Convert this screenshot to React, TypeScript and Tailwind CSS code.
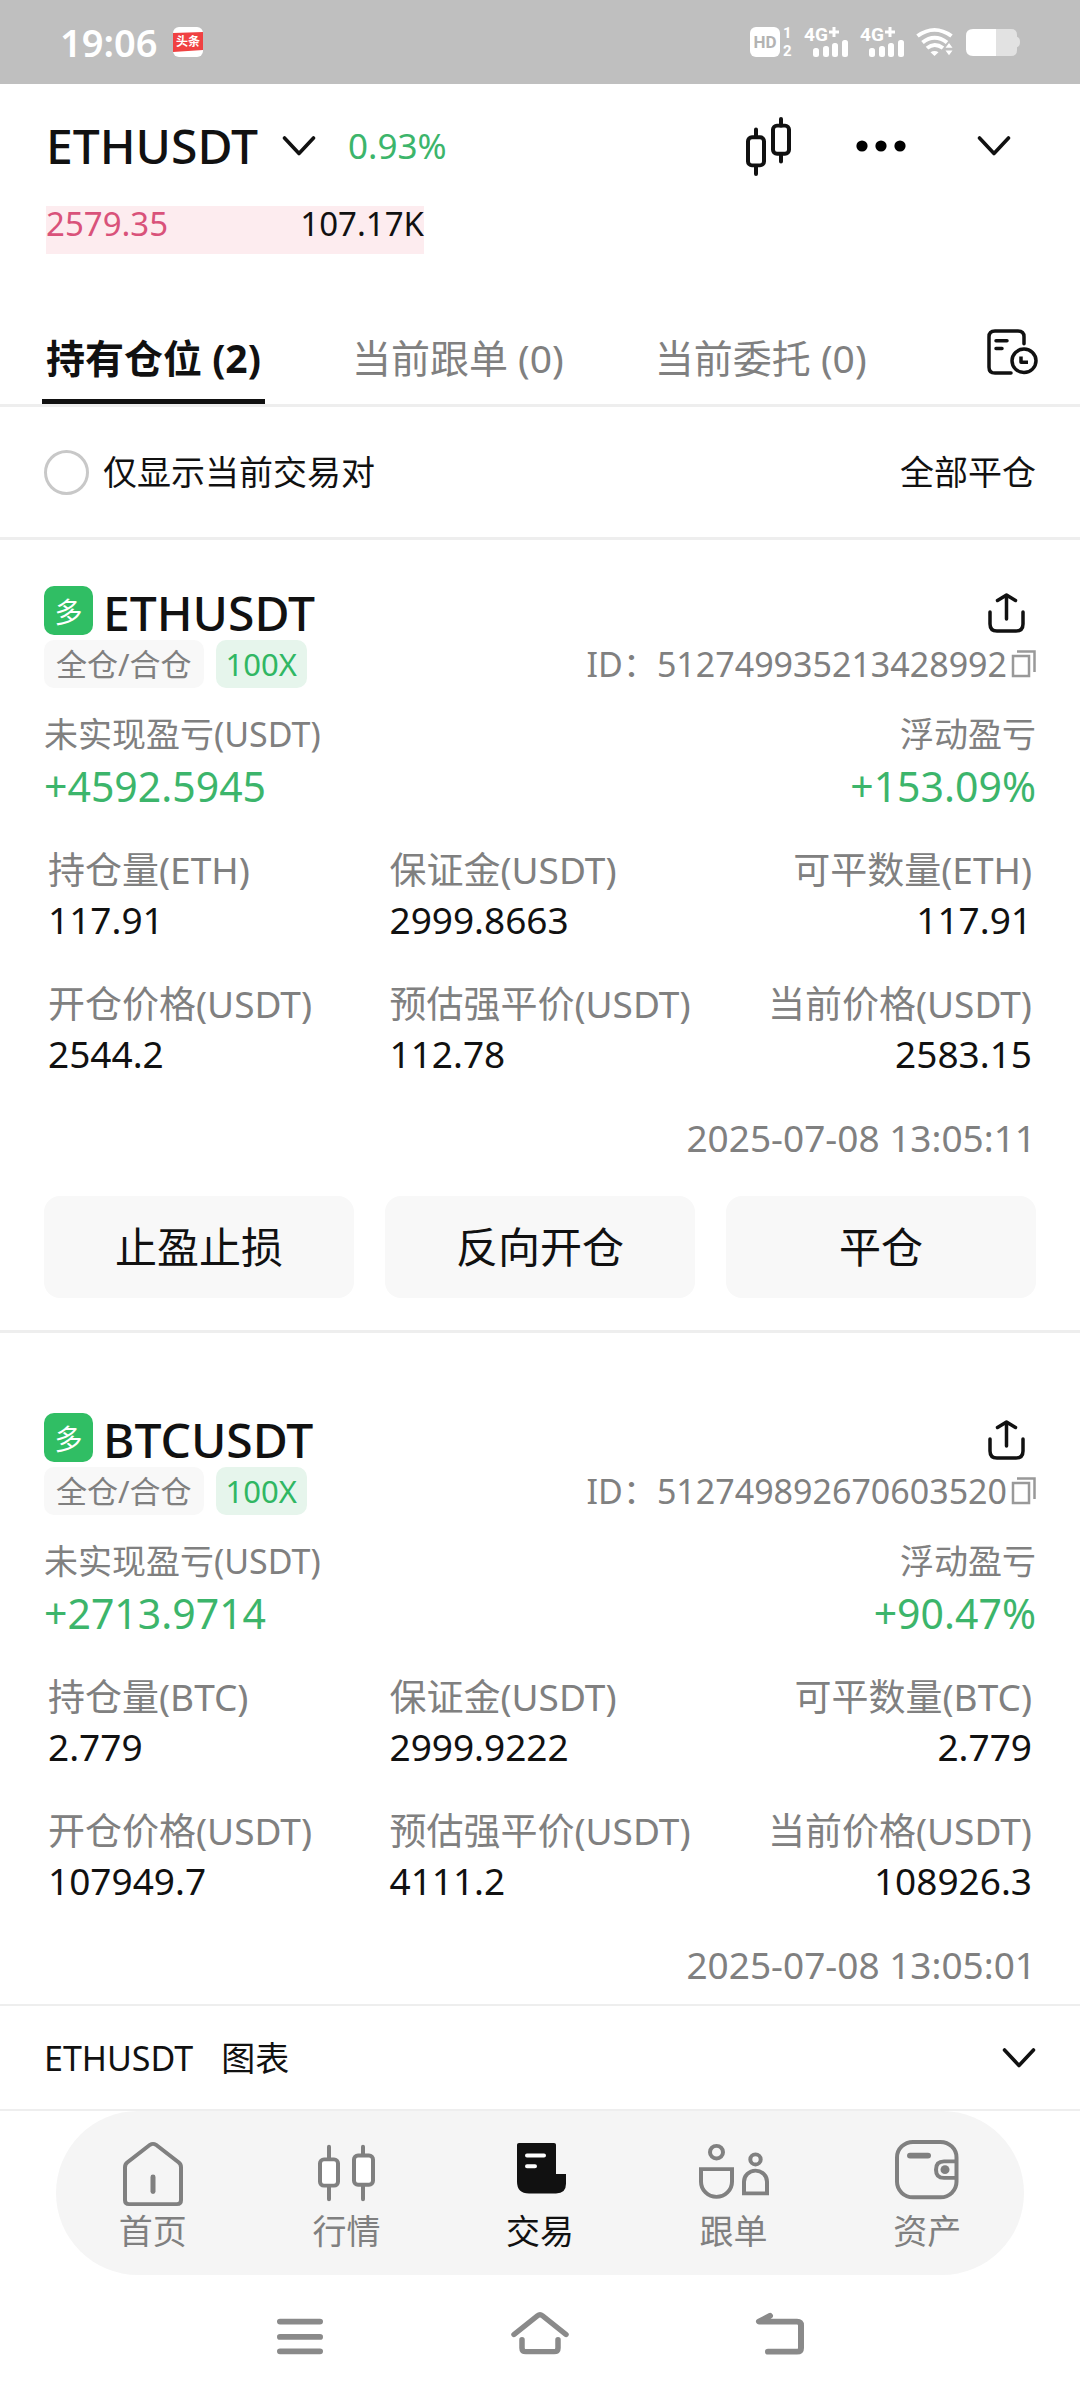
import type { ReactNode } from "react";

type Position = {
  symbol: string;
  coin: string;
  id: string;
  pnl: string;
  pnlRate: string;
  size: string;
  margin: string;
  openPrice: string;
  liqPrice: string;
  markPrice: string;
  time: string;
  actions: string[];
};

const positions: Position[] = [
  {
    symbol: "ETHUSDT",
    coin: "ETH",
    id: "512749935213428992",
    pnl: "+4592.5945",
    pnlRate: "+153.09%",
    size: "117.91",
    margin: "2999.8663",
    openPrice: "2544.2",
    liqPrice: "112.78",
    markPrice: "2583.15",
    time: "2025-07-08 13:05:11",
    actions: ["止盈止损", "反向开仓", "平仓"],
  },
  {
    symbol: "BTCUSDT",
    coin: "BTC",
    id: "512749892670603520",
    pnl: "+2713.9714",
    pnlRate: "+90.47%",
    size: "2.779",
    margin: "2999.9222",
    openPrice: "107949.7",
    liqPrice: "4111.2",
    markPrice: "108926.3",
    time: "2025-07-08 13:05:01",
    actions: [],
  },
];

const tabs = [
  { label: "持有仓位 (2)", active: true },
  { label: "当前跟单 (0)", active: false },
  { label: "当前委托 (0)", active: false },
];

function ChevronDown() {
  return (
    <svg width="34" height="20" viewBox="0 0 34 20" fill="none" stroke="#111" strokeWidth="3.6" strokeLinecap="round" strokeLinejoin="round">
      <path d="M2.5 2 17 17.5 31.500 2" />
    </svg>
  );
}

function SignalIcon() {
  return (
    <svg className="overflow-visible font-['Roboto']" width="44" height="30" viewBox="0 0 44 30" fill="#fff">
      <text x="0" y="14" fontSize="19" fontWeight="700">
        4G
      </text>
      <path d="M25 5h10M30 0v10" stroke="#fff" strokeWidth="3" />
      <rect x="9" y="21" width="6" height="9" rx="2.5" />
      <rect x="19" y="19" width="6" height="11" rx="2.5" />
      <rect x="28" y="16" width="6" height="14" rx="2.5" />
      <rect x="38" y="13" width="6" height="17" rx="2.5" />
    </svg>
  );
}

function StatusBar() {
  return (
    <div className="flex h-[84px] items-center justify-between bg-[#bfbfbf] px-[60px]">
      <div className="flex items-center gap-4">
        <span className="text-[38px] leading-[44px] font-semibold text-white">19:06</span>
        <svg width="30" height="30" viewBox="0 0 30 30">
          <rect width="30" height="30" rx="6" fill="#fff" />
          <path d="M0 6 30 5v18L0 25z" fill="#f04142" />
          <text x="15" y="19" fontSize="12" fontWeight="700" fill="#fff" textAnchor="middle">
            头条
          </text>
        </svg>
      </div>
      <div className="flex items-center gap-3">
        <div className="flex items-center gap-[3px] font-['Roboto'] font-bold text-white">
          <span className="h-[30px] w-[30px] rounded-md bg-white text-center text-[17px] leading-[30px] text-[#b3b3b3]">HD</span>
          <span className="flex w-[9px] flex-col text-[15px] leading-[18px]">
            <span>1</span>
            <span>2</span>
          </span>
        </div>
        <SignalIcon />
        <SignalIcon />
        <svg width="38" height="30" viewBox="0 0 38 32" preserveAspectRatio="none" fill="none" stroke="#fff" strokeWidth="4">
          <path d="M1.500 9.500Q18.500-3.500 35.500 9.500" />
          <path d="M6.500 16.500Q18.500 6.500 31 16.500" />
          <path d="M11 22.500Q18.500 16 27 22.500" />
          <path d="M14.500 27q4-3 8 0l-4 4z" fill="#fff" stroke="none" />
          <path d="M29.500 22l3.500-5 3.500 5zM29.500 25h7L33 30z" fill="#fff" stroke="none" />
        </svg>
        <svg width="54" height="27" viewBox="0 0 54 28" preserveAspectRatio="none">
          <path d="M30 0h15q6 0 6 6v2q3 1 3 5.500T51 19v3q0 6-6 6H30z" fill="#e2e2e2" />
          <path d="M30 0H7Q0 0 0 7v14q0 7 7 7h23z" fill="#fff" />
        </svg>
      </div>
    </div>
  );
}

function Header() {
  return (
    <header className="pt-[30px]">
      <div className="flex h-16 items-center justify-between pr-[30px] pl-[46px]">
        <div className="flex items-center gap-8">
          <button type="button" className="flex items-center gap-6">
            <span className="text-[48px] leading-[64px] font-medium">ETHUSDT</span>
            <ChevronDown />
          </button>
          <span className="text-[35px] leading-[64px] text-[#3cb56b]">0.93%</span>
        </div>
        <div className="flex items-center">
          <button type="button" aria-label="K线" className="flex w-[113px] justify-center">
            <svg width="46" height="60" viewBox="0 0 46 62" preserveAspectRatio="none" fill="none" stroke="#111" strokeWidth="4" strokeLinecap="round">
              <rect x="3" y="22" width="16" height="29" rx="4" />
              <rect x="28" y="10" width="16" height="29" rx="4" />
              <path d="M11 14v7M11 52v8M36 3v7M36 40v7" />
            </svg>
          </button>
          <button type="button" aria-label="更多" className="flex w-[113px] justify-center">
            <svg width="50" height="12" viewBox="0 0 50 12">
              <circle cx="6" cy="6" r="5.6" />
              <circle cx="25" cy="6" r="5.6" />
              <circle cx="44" cy="6" r="5.6" />
            </svg>
          </button>
          <button type="button" aria-label="收起" className="flex w-[113px] justify-center">
            <ChevronDown />
          </button>
        </div>
      </div>
      <div className="mt-7 ml-[46px] flex h-12 w-[35%] justify-between bg-[#fdecef] text-[33px] leading-[36px]">
        <span className="text-[#d9527a]">2579.35</span>
        <span>107.17K</span>
      </div>
    </header>
  );
}

function Tabs() {
  return (
    <div className="mt-[79px] flex items-start justify-between border-b-[3px] border-[#eee] px-[42px]">
      <div className="flex gap-[83px]" role="tablist">
        {tabs.map((tab) => (
          <button
            key={tab.label}
            type="button"
            role="tab"
            aria-selected={tab.active}
            className={
              tab.active
                ? "border-b-[5px] border-[#111] px-1 pb-4 text-[39px] leading-[50px] font-bold"
                : "border-b-[5px] border-transparent px-1 pb-4 text-[39px] leading-[50px] text-[#808080]"
            }
          >
            {tab.label}
          </button>
        ))}
      </div>
      <button type="button" aria-label="历史记录" className="-mt-1">
        <svg width="51" height="46" viewBox="0 0 51 47" preserveAspectRatio="none" fill="none" stroke="#111" strokeWidth="3.5" strokeLinecap="round" strokeLinejoin="round">
          <path d="M37 15V8q0-6-6-6H8Q2 2 2 8v31q0 6 6 6h16" />
          <path d="M9 12h11M9 20h6" />
          <circle cx="37" cy="32.5" r="12" />
          <path d="M34 28v6h7" strokeLinecap="butt" />
        </svg>
      </button>
    </div>
  );
}

function Metric({ label, value, right }: { label: string; value: string; right?: boolean }) {
  return (
    <div className={right ? "text-right" : ""}>
      <dt className="text-[37px] leading-[48px] text-[#808080]">{label}</dt>
      <dd className="text-[37px] leading-[52px]">{value}</dd>
    </div>
  );
}

function PositionCard({ position }: { position: Position }) {
  return (
    <article className="border-[#eee] px-11 pt-20 pb-8 not-last:border-b-[3px] first:pt-[46px] last:pb-0">
      <div className="flex h-[54px] items-center justify-between">
        <div className="flex h-full items-start gap-[10px]">
          <span className="size-[49px] rounded-[10px] bg-[#30be64] text-center text-[28px] leading-[52px] text-white">多</span>
          <h2 className="text-[48px] leading-[54px] font-medium">{position.symbol}</h2>
        </div>
        <button type="button" aria-label="分享" className="flex w-[60px] justify-center">
          <svg width="37" height="40" viewBox="0 0 37 40" fill="none" stroke="#111" strokeWidth="3.5" strokeLinecap="round" strokeLinejoin="round">
            <path d="M2 19v12q0 7 7 7h19q7 0 7-7V19" />
            <path d="M18.500 26V2M9.500 7.500 18.500 2l9 5.500" />
          </svg>
        </button>
      </div>

      <div className="flex h-12 items-center justify-between text-[#808080]">
        <div className="flex gap-3 text-[31px] leading-[48px]">
          <span className="rounded-[10px] bg-[#f8f8f8] px-3">全仓/合仓</span>
          <span className="rounded-[10px] bg-[#e6f5ec] px-[10px] text-[#30b763]">100X</span>
        </div>
        <div className="flex items-center gap-1 text-[34px] leading-[48px]">
          <span>ID：{position.id}</span>
          <button type="button" aria-label="复制">
            <svg width="25" height="28" viewBox="0 0 25 28" fill="none" stroke="#999" strokeWidth="2.5">
              <rect x="2" y="6" width="16" height="20" />
              <path d="M6 1.500h17.500V22" />
            </svg>
          </button>
        </div>
      </div>

      <dl className="mt-[22px] flex justify-between">
        <div>
          <dt className="text-[34px] leading-[48px] text-[#808080]">未实现盈亏(USDT)</dt>
          <dd className="text-[41px] leading-[56px] text-[#3cb56b]">{position.pnl}</dd>
        </div>
        <div className="text-right">
          <dt className="text-[34px] leading-[48px] text-[#808080]">浮动盈亏</dt>
          <dd className="text-[41px] leading-[56px] text-[#3cb56b]">{position.pnlRate}</dd>
        </div>
      </dl>

      <dl className="mt-8 grid grid-cols-[auto_auto_auto] justify-between gap-y-[34px] px-1">
        <Metric label={`持仓量(${position.coin})`} value={position.size} />
        <Metric label="保证金(USDT)" value={position.margin} />
        <Metric label={`可平数量(${position.coin})`} value={position.size} right />
        <Metric label="开仓价格(USDT)" value={position.openPrice} />
        <Metric label="预估强平价(USDT)" value={position.liqPrice} />
        <Metric label="当前价格(USDT)" value={position.markPrice} right />
      </dl>

      <p className="mt-8 text-right text-[37px] leading-[52px] text-[#808080]">{position.time}</p>

      {position.actions.length > 0 && (
        <div className="mt-8 grid grid-cols-3 gap-[31px]">
          {position.actions.map((action) => (
            <button key={action} type="button" className="h-[102px] rounded-2xl bg-[#f8f8f8] text-[42px] leading-[52px]">
              {action}
            </button>
          ))}
        </div>
      )}
    </article>
  );
}

function NavItem({ label, active, children }: { label: string; active?: boolean; children: ReactNode }) {
  return (
    <a href="#" className={active ? "flex flex-col items-center text-[#111]" : "flex flex-col items-center text-[#808080]"}>
      <svg width="72" height="68" viewBox="0 0 72 70" preserveAspectRatio="none" fill="none" stroke="currentColor" strokeWidth="4">
        {children}
      </svg>
      <span className="text-[34px] leading-[46px]">{label}</span>
    </a>
  );
}

function BottomNav() {
  return (
    <nav className="mx-14 grid grid-cols-5 rounded-full bg-[#f5f5f5] pt-[29px] pb-[21px]">
      <NavItem label="首页">
        <path d="M8 28q0-3 2.500-5L33 5q3-2 6 0l22.500 18q2.500 2 2.500 5v34q0 4-4 4H12q-4 0-4-4z" />
        <path d="M36 38v15" strokeWidth="5" strokeLinecap="round" />
      </NavItem>
      <NavItem label="行情">
        <path d="M19 7v54M53 7v54" strokeLinecap="round" />
        <rect x="10" y="20" width="18" height="27" rx="4" fill="#fff" />
        <rect x="44" y="16" width="19" height="30" rx="4" fill="#fff" />
      </NavItem>
      <NavItem label="交易" active>
        <path d="M13 5q0-2 2-2h35q2 0 2 2v30h10v10q0 10-10 10H25q-12 0-12-12z" fill="currentColor" stroke="none" />
        <path d="M23 16h17M23 27h8" stroke="#fff" strokeLinecap="round" />
      </NavItem>
      <NavItem label="跟单">
        <circle cx="18.5" cy="12.5" r="6.5" />
        <path d="M3 30h31v13a15.500 15.500 0 0 1-31 0z" />
        <circle cx="57.5" cy="20" r="5.2" />
        <path d="M46 55V43a11.500 11.500 0 0 1 23 0v12z" />
      </NavItem>
      <NavItem label="资产">
        <rect x="6" y="2" width="59.5" height="57" rx="16" />
        <path d="M19 16h18" strokeWidth="6" strokeLinecap="round" />
        <path d="M65 22H53q-8 0-8 8.500T53 39h12" />
        <circle cx="54" cy="30.5" r="4.5" fill="currentColor" stroke="none" />
      </NavItem>
    </nav>
  );
}

function SystemNav() {
  return (
    <div className="mx-auto grid w-2/3 grid-cols-3 justify-items-center pt-9 pb-[43px]">
      <button type="button" aria-label="菜单">
        <svg width="60" height="46" viewBox="0 0 60 48" preserveAspectRatio="none" fill="none" stroke="#8a8a8a" strokeWidth="6" strokeLinecap="round">
          <path d="M10 11h40M10 27h40M10 42h40" />
        </svg>
      </button>
      <button type="button" aria-label="主屏幕">
        <svg width="60" height="46" viewBox="0 0 60 48" preserveAspectRatio="none" fill="none" stroke="#8a8a8a" strokeWidth="5.5" strokeLinecap="round" strokeLinejoin="round">
          <path d="M4 24.500 27.500 5q2.500-2 5 0L56 24.500" />
          <path d="M12 30v8.500q0 4 4 4h28q4 0 4-4V30" />
        </svg>
      </button>
      <button type="button" aria-label="返回">
        <svg width="60" height="46" viewBox="0 0 60 48" preserveAspectRatio="none" fill="none" stroke="#8a8a8a" strokeWidth="6" strokeLinecap="round" strokeLinejoin="round">
          <path d="M20 5 9 11h38q4 0 4 4v23.500q0 4-4 4H18" />
        </svg>
      </button>
    </div>
  );
}

export default function App() {
  return (
    <div className="flex min-h-screen flex-col bg-white font-['Noto_Sans','Noto_Sans_CJK_SC',sans-serif] text-[#111]">
      <StatusBar />
      <Header />
      <Tabs />

      <div className="flex h-[133px] items-center justify-between border-b-[3px] border-[#eee] px-11 text-[34px] leading-[48px]">
        <label className="flex items-center gap-[14px]">
          <input type="checkbox" className="size-[45px] appearance-none rounded-full border-[3px] border-[#c8c8c8]" />
          仅显示当前交易对
        </label>
        <button type="button">全部平仓</button>
      </div>

      <main>
        {positions.map((position) => (
          <PositionCard key={position.id} position={position} />
        ))}
      </main>

      <footer className="mt-auto">
        <button type="button" className="flex h-[107px] w-full items-center justify-between border-y-2 border-[#eee] px-11 text-[34px] leading-[48px]">
          <span className="flex gap-7">
            <span>ETHUSDT</span>
            <span>图表</span>
          </span>
          <ChevronDown />
        </button>
        <BottomNav />
        <SystemNav />
      </footer>
    </div>
  );
}
